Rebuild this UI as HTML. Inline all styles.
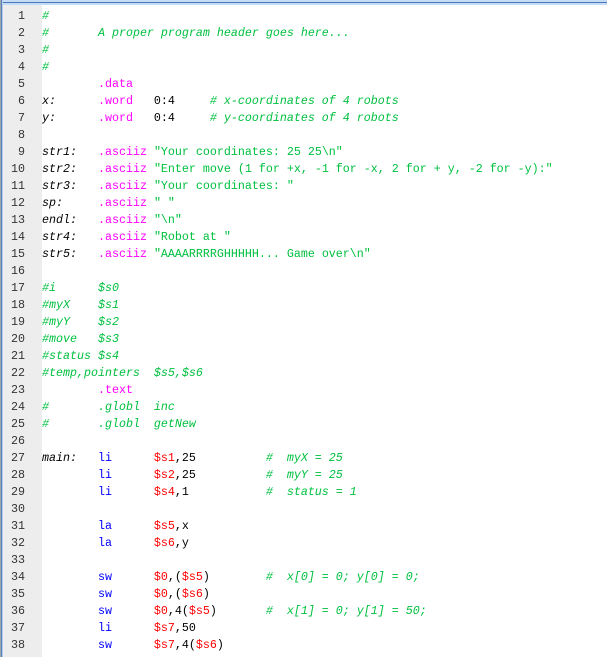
<!DOCTYPE html>
<html><head><meta charset="utf-8"><style>
html,body{margin:0;padding:0;width:607px;height:657px;overflow:hidden;background:#fff}
.top{position:absolute;left:0;top:0;width:607px;height:5px;background:#c6dcf4}
.top .l{position:absolute;left:0;top:2px;width:607px;height:1px;background:#4a78c0}
.lb{position:absolute;left:0;top:0;width:1px;height:657px;background:#9aa}
.lb2{position:absolute;left:1px;top:0;width:1px;height:657px;background:#5a7fc0}
.lb3{position:absolute;left:2px;top:0;width:1px;height:657px;background:#b9cfee}
.gut{position:absolute;left:3px;top:5px;width:39px;height:652px;background:#ededed}
pre{margin:0;font-family:"Liberation Mono",monospace;font-size:11.67px;line-height:17px;tab-size:8;-moz-tab-size:8;position:absolute;top:8px;white-space:pre}
.num{left:3px;width:22px;text-align:right;color:#333}
.code{left:42px;color:#000}
.c{color:#00c040;font-style:italic}
.s{color:#00c040}
.d{color:#ff00ff}
.k{color:#0000ff}
.r{color:#ff0000}
.lab{font-style:italic}
</style></head><body>
<div class="top"><div class="l"></div></div>
<div class="lb"></div><div class="lb2"></div><div class="lb3"></div>
<div class="gut"></div>
<pre class="num">1
2
3
4
5
6
7
8
9
10
11
12
13
14
15
16
17
18
19
20
21
22
23
24
25
26
27
28
29
30
31
32
33
34
35
36
37
38</pre>
<pre class="code"><span class="c">#</span>
<span class="c">#	A proper program header goes here...</span>
<span class="c">#</span>
<span class="c">#</span>
	<span class="d">.data</span>
<span class="lab">x:</span>	<span class="d">.word</span>	0:4	<span class="c"># x-coordinates of 4 robots</span>
<span class="lab">y:</span>	<span class="d">.word</span>	0:4	<span class="c"># y-coordinates of 4 robots</span>

<span class="lab">str1:</span>	<span class="d">.asciiz</span> <span class="s">"Your coordinates: 25 25\n"</span>
<span class="lab">str2:</span>	<span class="d">.asciiz</span> <span class="s">"Enter move (1 for +x, -1 for -x, 2 for + y, -2 for -y):"</span>
<span class="lab">str3:</span>	<span class="d">.asciiz</span> <span class="s">"Your coordinates: "</span>
<span class="lab">sp:</span>	<span class="d">.asciiz</span> <span class="s">" "</span>
<span class="lab">endl:</span>	<span class="d">.asciiz</span> <span class="s">"\n"</span>
<span class="lab">str4:</span>	<span class="d">.asciiz</span> <span class="s">"Robot at "</span>
<span class="lab">str5:</span>	<span class="d">.asciiz</span> <span class="s">"AAAARRRRGHHHHH... Game over\n"</span>

<span class="c">#i	$s0</span>
<span class="c">#myX	$s1</span>
<span class="c">#myY	$s2</span>
<span class="c">#move	$s3</span>
<span class="c">#status $s4</span>
<span class="c">#temp,pointers  $s5,$s6</span>
	<span class="d">.text</span>
<span class="c">#	.globl  inc</span>
<span class="c">#	.globl  getNew</span>

<span class="lab">main:</span>	<span class="k">li</span>	<span class="r">$s1</span>,25		<span class="c">#  myX = 25</span>
	<span class="k">li</span>	<span class="r">$s2</span>,25		<span class="c">#  myY = 25</span>
	<span class="k">li</span>	<span class="r">$s4</span>,1		<span class="c">#  status = 1</span>

	<span class="k">la</span>	<span class="r">$s5</span>,x
	<span class="k">la</span>	<span class="r">$s6</span>,y

	<span class="k">sw</span>	<span class="r">$0</span>,(<span class="r">$s5</span>)	<span class="c">#  x[0] = 0; y[0] = 0;</span>
	<span class="k">sw</span>	<span class="r">$0</span>,(<span class="r">$s6</span>)
	<span class="k">sw</span>	<span class="r">$0</span>,4(<span class="r">$s5</span>)	<span class="c">#  x[1] = 0; y[1] = 50;</span>
	<span class="k">li</span>	<span class="r">$s7</span>,50
	<span class="k">sw</span>	<span class="r">$s7</span>,4(<span class="r">$s6</span>)</pre>
</body></html>
